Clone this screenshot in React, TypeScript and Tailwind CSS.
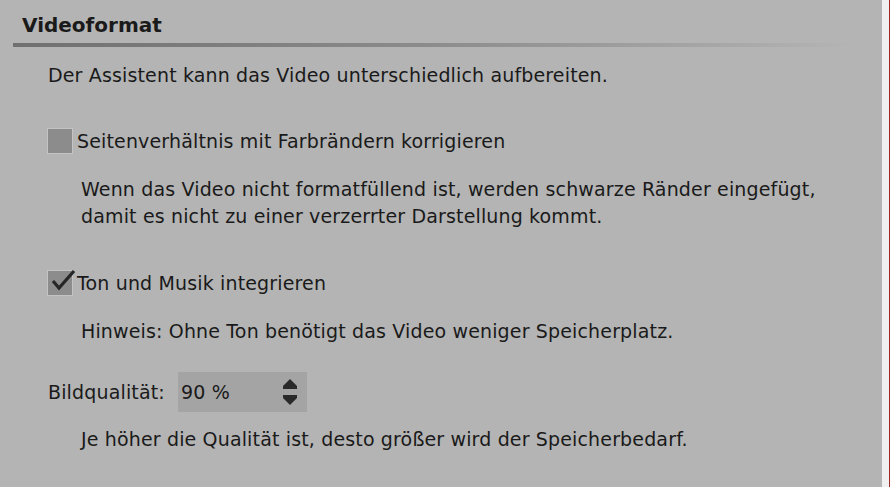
import React from 'react';

const font = { fontFamily: '"DejaVu Sans", "Liberation Sans", sans-serif' };

function Checkbox({ checked }: { checked: boolean }) {
  return (
    <div className="relative w-[26px] h-[26px] border border-[#c4c4c4] bg-[#8c8c8c] shrink-0">
      {checked && (
        <svg className="absolute left-[1px] top-[-3px]" width="28" height="26" viewBox="0 0 28 26">
          <path d="M4 13 L10 20 L25 3" fill="none" stroke="#262626" strokeWidth="3.2" strokeLinejoin="miter" />
        </svg>
      )}
    </div>
  );
}

export default function App() {
  return (
    <div className="w-[890px] h-[487px] flex bg-[#b4b4b4] text-[#1a1a1a] overflow-hidden" style={font}>
      <div className="flex-1 flex flex-col text-[19px] tracking-[0.15px]">
        <div className="pl-[22px] pt-[12px] text-[20px] font-bold tracking-[0px] leading-[26px]">Videoformat</div>
        <div className="ml-[13px] mt-[5px] h-[4px] w-[840px] bg-gradient-to-r from-[#707070] via-[#8c8c8c] to-[#b4b4b4]" />
        <div className="pl-[48px] mt-[15px] leading-[27px]">
          Der Assistent kann das Video unterschiedlich aufbereiten.
        </div>
        <div className="flex items-center pl-[47px] mt-[39px] gap-[4px] h-[26px] leading-[26px]">
          <Checkbox checked={false} />
          <span>Seitenverhältnis mit Farbrändern korrigieren</span>
        </div>
        <div className="pl-[81px] mt-[22px] leading-[27px]">
          Wenn das Video nicht formatfüllend ist, werden schwarze Ränder eingefügt,
          <br />
          damit es nicht zu einer verzerrter Darstellung kommt.
        </div>
        <div className="flex items-center pl-[47px] mt-[40px] gap-[4px] h-[26px] leading-[26px]">
          <Checkbox checked={true} />
          <span>Ton und Musik integrieren</span>
        </div>
        <div className="pl-[81px] mt-[22px] leading-[27px]">
          Hinweis: Ohne Ton benötigt das Video weniger Speicherplatz.
        </div>
        <div className="flex items-center pl-[48px] mt-[27px]">
          <span className="w-[130px]">Bildqualität:</span>
          <div className="w-[129px] h-[40px] bg-[#a4a4a4] flex items-center pl-[3px] pr-[9px]">
            <span className="flex-1">90 %</span>
            <svg width="16" height="28" viewBox="0 0 16 28">
              <path d="M8 1 L15 8 L15 11 L1 11 L1 8 Z" fill="#2a2a2a" />
              <path d="M1 17 L15 17 L15 20 L8 27 L1 20 Z" fill="#2a2a2a" />
            </svg>
          </div>
        </div>
        <div className="pl-[81px] mt-[14px] leading-[27px]">
          Je höher die Qualität ist, desto größer wird der Speicherbedarf.
        </div>
      </div>
      <div className="w-[7px] bg-[#f0f0f0]" />
      <div className="w-[1px] bg-[#a02828]" />
    </div>
  );
}
